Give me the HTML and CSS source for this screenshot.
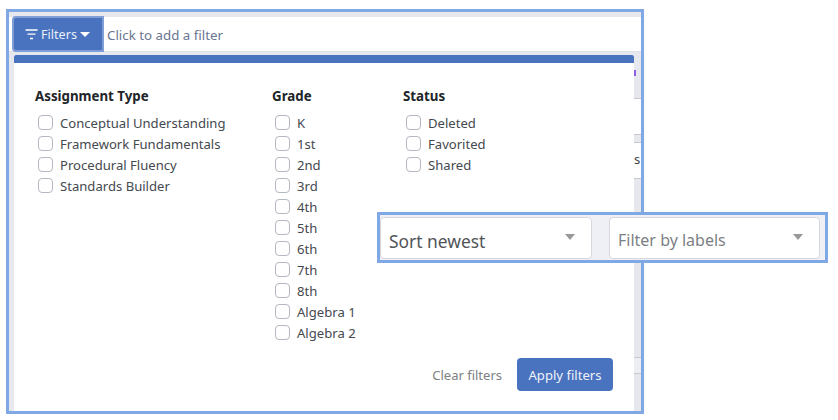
FILE: index.html
```html
<!DOCTYPE html>
<html lang="en">
<head>
  <meta charset="UTF-8" />
  <title>Filters</title>
  <link rel="stylesheet" href="styles.css">
</head>
<body>
  <div class="shot">
    <div class="filter-bar">
      <button class="filters-btn">
        <svg class="funnel" width="13" height="11" viewBox="0 0 13 11"><path d="M0.5 1h12M2.5 5.2h8M5 9.5h3" stroke="#fff" stroke-width="1.3" fill="none"/></svg>
        Filters
        <span class="caret"></span>
      </button>
      <span class="hint">Click to add a filter</span>
    </div>

    <div class="panel">
      <div class="panel-top"></div>
      <div class="columns">
        <div class="col col-type">
          <h4>Assignment Type</h4>
          <label><i></i>Conceptual Understanding</label>
          <label><i></i>Framework Fundamentals</label>
          <label><i></i>Procedural Fluency</label>
          <label><i></i>Standards Builder</label>
        </div>
        <div class="col col-grade">
          <h4>Grade</h4>
          <label><i></i>K</label>
          <label><i></i>1st</label>
          <label><i></i>2nd</label>
          <label><i></i>3rd</label>
          <label><i></i>4th</label>
          <label><i></i>5th</label>
          <label><i></i>6th</label>
          <label><i></i>7th</label>
          <label><i></i>8th</label>
          <label><i></i>Algebra 1</label>
          <label><i></i>Algebra 2</label>
        </div>
        <div class="col">
          <h4>Status</h4>
          <label><i></i>Deleted</label>
          <label><i></i>Favorited</label>
          <label><i></i>Shared</label>
        </div>
      </div>
      <div class="actions">
        <span class="clear">Clear filters</span>
        <button class="apply">Apply filters</button>
      </div>
    </div>

    <div class="edge">
      <b class="purple"></b>
      <b class="row row-a"></b>
      <b class="row row-b"><span>s</span></b>
      <b class="row row-c"></b>
    </div>
  </div>

  <div class="sort-box">
    <div class="select sort"><span>Sort newest</span><em></em></div>
    <div class="select labels"><span>Filter by labels</span><em></em></div>
  </div>
</body>
</html>
```

FILE: styles.css
```css
* { box-sizing: border-box; }
body {
  margin: 0;
  background: #fff;
  font-family: 'Noto Sans', 'Open Sans', sans-serif;
  color: #3b3f45;
}
.shot {
  position: relative;
  width: 638px;
  height: 405px;
  margin: 9px 0 0 6px;
  border: 3px solid #7fa8e4;
  background: #e6e8ee;
}

/* top bar */
.filter-bar {
  display: flex;
  align-items: center;
  height: 35px;
  margin: 5px 0 0 0;
  padding-left: 4px;
  background: #fff;
  border-bottom: 1px solid #dfe1e6;
}
.filters-btn {
  display: flex;
  align-items: center;
  gap: 3px;
  width: 90px;
  height: 34px;
  padding: 0 0 0 12px;
  background: #4a73bf;
  border: none;
  outline: 2px solid #7f9dd6;
  outline-offset: -1px;
  border-radius: 3px 0 0 3px;
  color: #e9eef8;
  font: 12.6px 'Noto Sans', sans-serif;
}
.caret {
  width: 0;
  height: 0;
  border-left: 5px solid transparent;
  border-right: 5px solid transparent;
  border-top: 5px solid #fff;
}
.hint {
  margin: 2px 0 0 4px;
  color: #6a7692;
  font-size: 13.3px;
}

/* dropdown panel */
.panel {
  position: absolute;
  left: 5px;
  top: 43px;
  right: 7px;
  bottom: 0;
  background: #fff;
}
.panel-top {
  height: 8px;
  background: #4a73bf;
  border-radius: 2px 2px 0 0;
}
.columns {
  display: flex;
  padding: 24px 0 0 21px;
}
.col-type { width: 237px; }
.col-grade { width: 131px; }
.col h4 {
  margin: 0 0 6px;
  height: 19px;
  color: #212529;
  font-size: 13.3px;
  font-weight: 700;
  line-height: 19px;
}
.col label {
  display: flex;
  align-items: center;
  height: 21px;
  padding-left: 3px;
  font-size: 13.1px;
  color: #45494f;
  white-space: nowrap;
}
.col i {
  width: 15px;
  height: 15px;
  margin-right: 7px;
  border: 1px solid #b4b8c0;
  border-radius: 4px;
  background: #fff;
}
.actions {
  position: absolute;
  right: 21px;
  bottom: 20px;
  display: flex;
  align-items: center;
  gap: 15px;
}
.clear {
  color: #7d8084;
  font-size: 13px;
}
.apply {
  width: 96px;
  height: 33px;
  padding: 0;
  background: #4a73bf;
  border: none;
  border-radius: 4px;
  color: #eef2fa;
  font: 13.1px 'Noto Sans', sans-serif;
}

/* what shows behind the panel */
.edge {
  position: absolute;
  right: 0;
  top: 51px;
  width: 7px;
  height: 351px;
}
.edge b { position: absolute; left: 0; right: 0; background: #fff; }
.edge .purple {
  top: 7px;
  right: 5px;
  height: 6px;
  background: #8f5fe0;
}
.edge .row-a { top: 35px; height: 37px; border-top: 1px solid #c6c9d2; border-bottom: 1px solid #c6c9d2; }
.edge .row-b { top: 79px; height: 37px; border-top: 1px solid #c6c9d2; border-bottom: 1px solid #c6c9d2; overflow: hidden; }
.edge .row-b span { font: 400 13px 'Noto Sans', sans-serif; line-height: 33px; color: #444; }
.edge .row-c { top: 294px; height: 17px; background: #eceef2; border-top: 1px solid #c6c9d2; border-bottom: 1px solid #c6c9d2; }

/* callout */
.sort-box {
  position: absolute;
  left: 377px;
  top: 212px;
  display: flex;
  gap: 17px;
  width: 451px;
  height: 51px;
  padding: 2px 0 0 0;
  border: 3px solid #7fa8e4;
  background: #eff0f6;
}
.select {
  position: relative;
  display: flex;
  align-items: center;
  height: 42px;
  background: #fff;
  border: 1px solid #d6d8de;
  border-radius: 4px;
}
.sort { width: 212px; padding: 5px 0 0 8px; font-size: 17.4px; color: #505458; }
.labels { width: 211px; padding: 3px 0 0 8px; font-size: 16px; color: #7b7f84; }
.select em {
  position: absolute;
  right: 16px;
  top: 16px;
  border-left: 5px solid transparent;
  border-right: 5px solid transparent;
  border-top: 6px solid #999;
}
```
